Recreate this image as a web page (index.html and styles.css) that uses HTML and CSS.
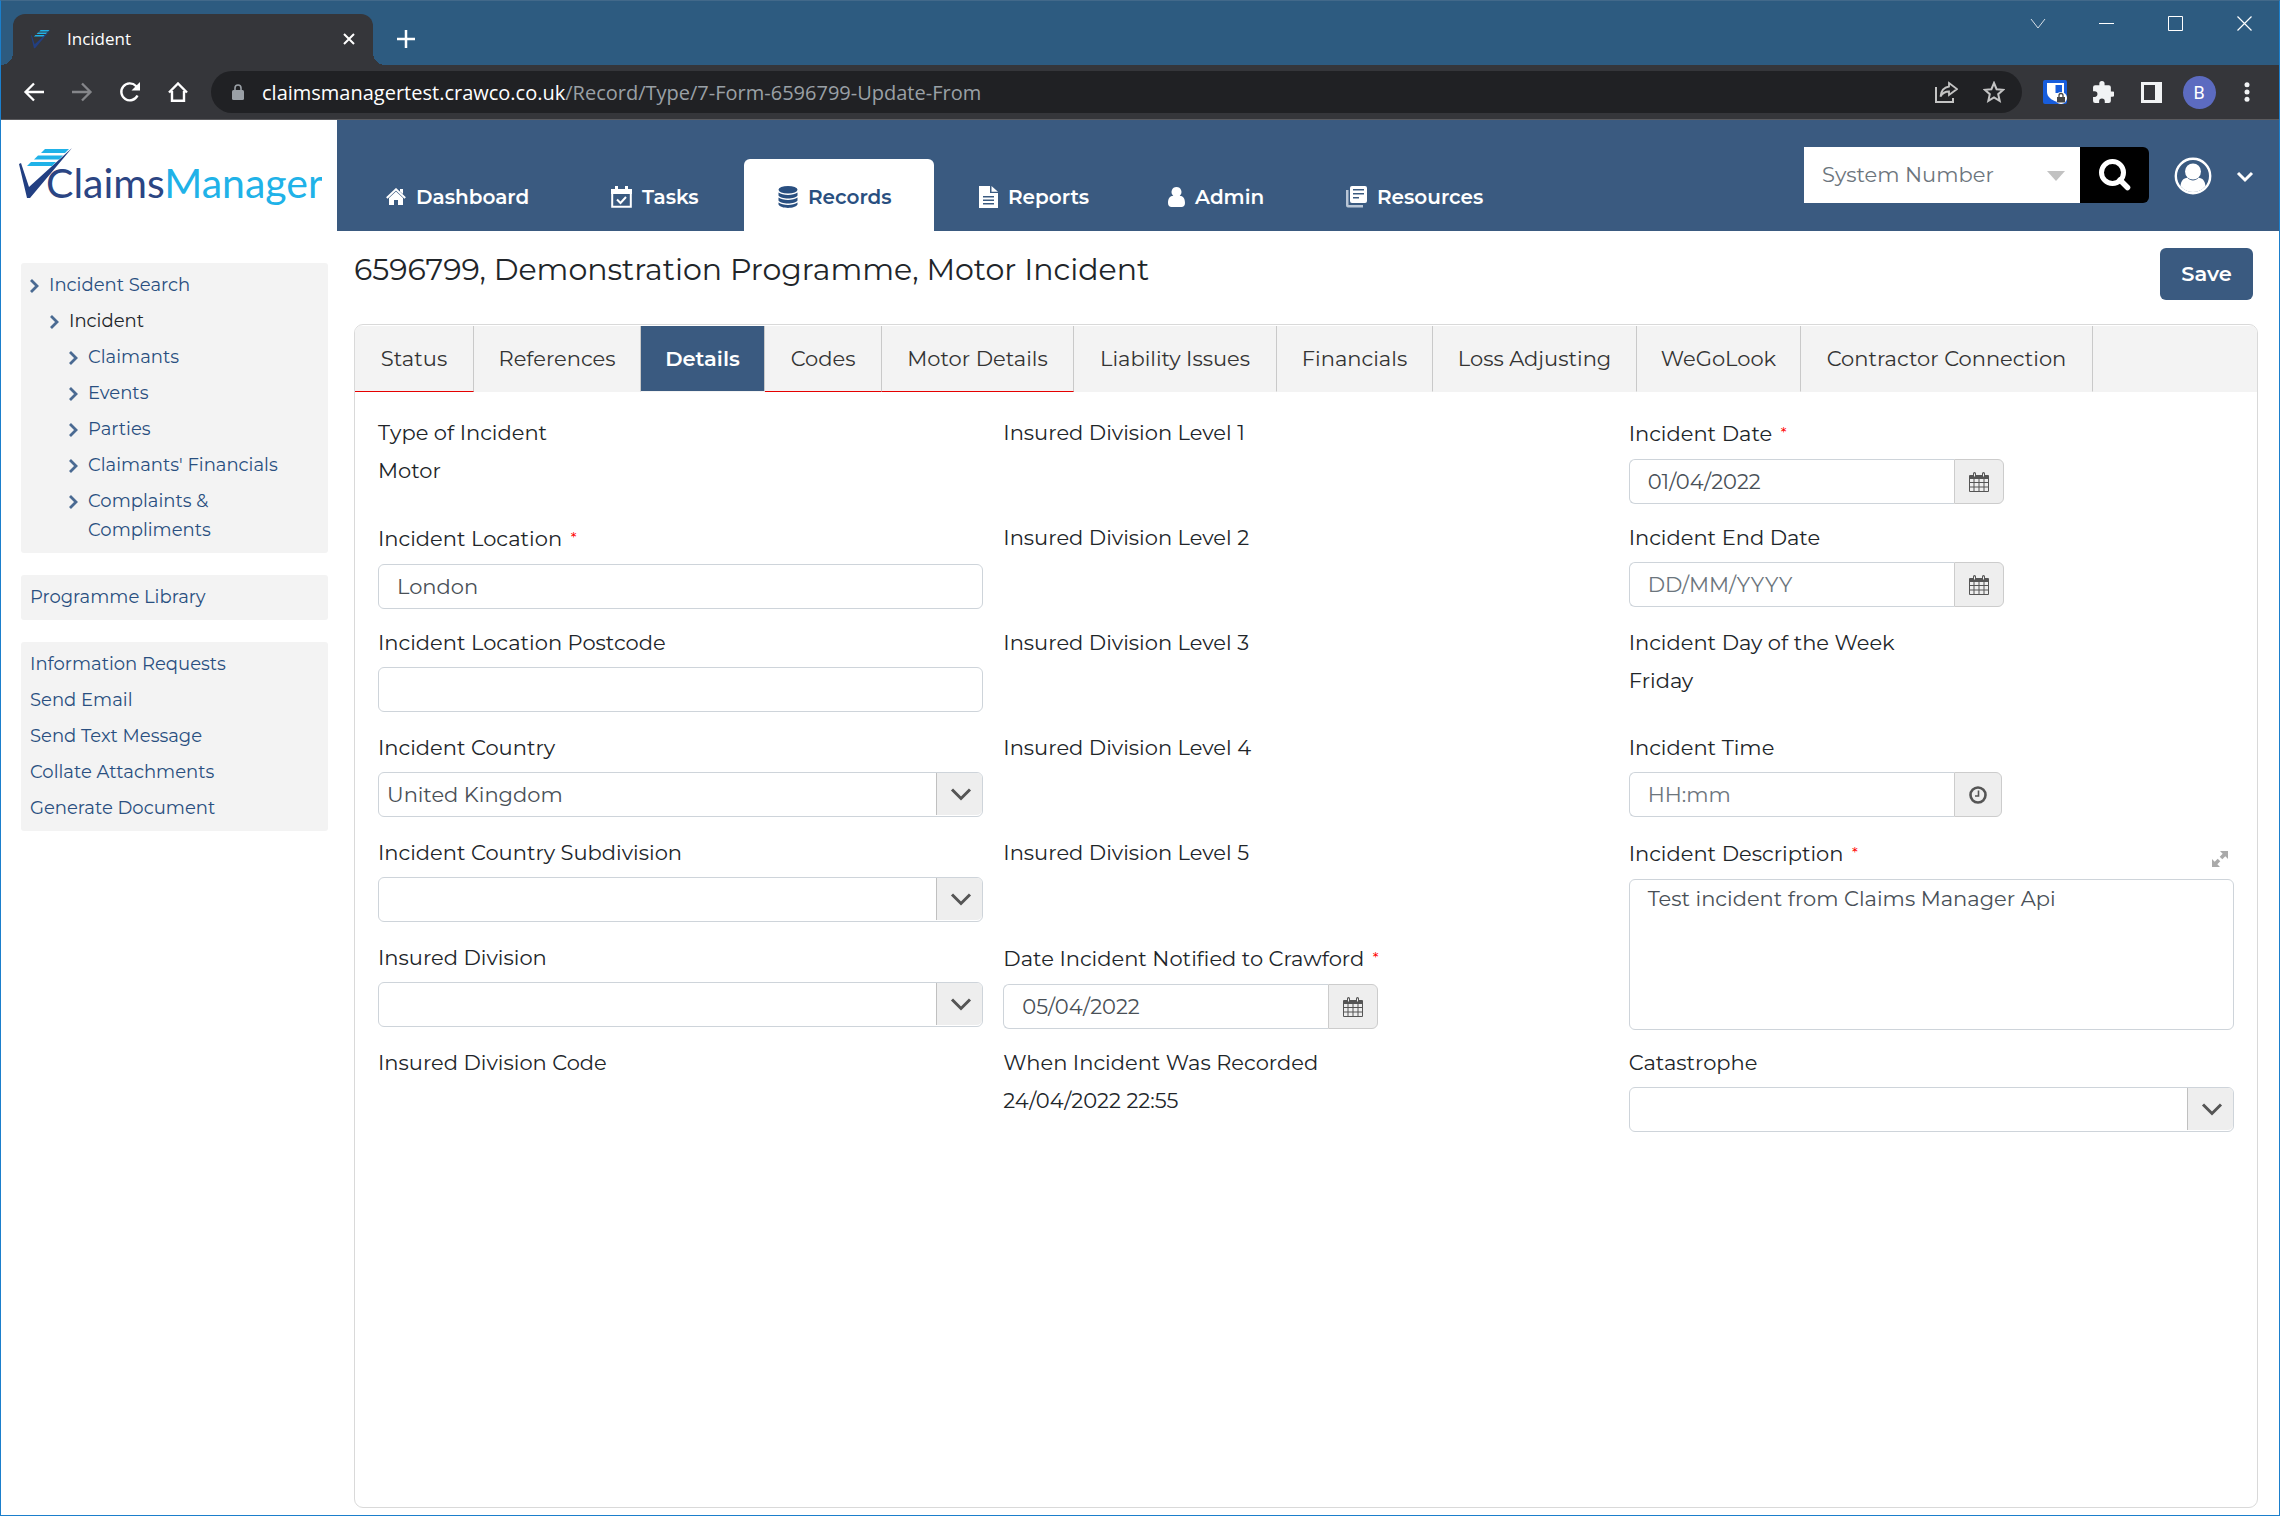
FILE: index.html
```html
<!DOCTYPE html>
<html lang="en">
<head>
<meta charset="utf-8">
<title>Incident</title>
<link rel="stylesheet" href="styles.css">
</head>
<body>
<svg class="sprite" aria-hidden="true">
  <defs>
    <symbol id="i-calendar" viewBox="0 0 20 20"><path fill="#555" fill-rule="evenodd" d="M1 3h3V1.500a1.500 1.500 0 0 1 3 0V3h6V1.500a1.500 1.500 0 0 1 3 0V3h3a1 1 0 0 1 1 1v15a1 1 0 0 1-1 1H1a1 1 0 0 1-1-1V4a1 1 0 0 1 1-1zM1 7v3h3.500V7zm4.500 0v3h4V7zm5 0v3h4V7zm5 0v3H19V7zM1 11v3.500h3.500V11zm4.500 0v3.500h4V11zm5 0v3.500h4V11zm5 0v3.500H19V11zM1 15.500V19h3.500v-3.500zm4.500 0V19h4v-3.500zm5 0V19h4v-3.500zm5 0V19H19v-3.500z"/><path fill="#eee" d="M5 1.500h1v3H5zM14 1.500h1v3h-1z"/></symbol>
    <symbol id="i-down" viewBox="0 0 22 14"><path d="M2 2.500l9 9 9-9" fill="none" stroke="#555" stroke-width="3"/></symbol>
    <symbol id="i-angle" viewBox="0 0 10 16"><path d="M1 2l6 6-6 6" fill="none" stroke="#4a6a92" stroke-width="2.800"/></symbol>
    <symbol id="i-mark" viewBox="0 0 54 52"><path fill="#223f82" d="M0 17l2-1 8 24L53 1 11 51H8z"/><path fill="#20b2e8" d="M26 2h24l-4 4H22zM19 8.500h25l-4 4H15zM12 15h25l-4 4H8z"/></symbol>
  </defs>
</svg>
<div class="window">
  <header class="titlebar">
    <div class="browser-tab">
      <svg class="favicon" aria-hidden="true"><use href="#i-mark"/></svg>
      <span class="browser-tab-title">Incident</span>
      <button class="bare tab-close" aria-label="Close tab"><svg width="14" height="14"><path d="M2 2l10 10M12 2L2 12" stroke="#fff" stroke-width="2"/></svg></button>
    </div>
    <button class="bare new-tab" aria-label="New tab"><svg width="20" height="20"><path d="M10 1v18M1 10h18" stroke="#fff" stroke-width="2.500"/></svg></button>
    <div class="window-controls">
      <button class="bare" aria-label="Search tabs"><svg width="16" height="16"><path d="M1 3l7 9 7-9" fill="none" stroke="#d5dee6"/></svg></button>
      <button class="bare" aria-label="Minimise"><svg width="16" height="16"><path d="M0 7.500h15" stroke="#fff"/></svg></button>
      <button class="bare" aria-label="Maximise"><svg width="16" height="16"><path d="M.5.500h14v14H.5z" fill="none" stroke="#fff"/></svg></button>
      <button class="bare" aria-label="Close"><svg width="16" height="16"><path d="M.5.500l14 14M14.500.500l-14 14" stroke="#fff" stroke-width="1.200"/></svg></button>
    </div>
  </header>
  <div class="toolbar">
    <button class="bare tool" aria-label="Back"><svg width="22" height="20"><path d="M21 10H3M11 1.500L2.500 10l8.500 8.500" fill="none" stroke="#fff" stroke-width="2.300"/></svg></button>
    <button class="bare tool" aria-label="Forward"><svg width="22" height="20"><path d="M1 10h18M11 1.500l8.500 8.500-8.500 8.500" fill="none" stroke="#85868a" stroke-width="2.300"/></svg></button>
    <button class="bare tool" aria-label="Reload"><svg width="22" height="22"><path d="M18.500 14.500A8.500 8.500 0 1 1 17 5l2 2.500" fill="none" stroke="#fff" stroke-width="2.400"/><path d="M21 1v8.500h-8.500z" fill="#fff"/></svg></button>
    <button class="bare tool" aria-label="Home"><svg width="20" height="20"><path d="M1 10.500L10 1.500l9 9M4 9v9.800h12V9" fill="none" stroke="#fff" stroke-width="2.400"/></svg></button>
    <div class="omnibox">
      <svg class="lock" viewBox="0 0 12 16" aria-hidden="true"><path d="M3 7V4a3 3 0 0 1 6 0v3" fill="none" stroke="#9aa0a6" stroke-width="1.600"/><rect y="6" width="12" height="10" rx="1.500" fill="#9aa0a6"/></svg>
      <div class="url"><span class="url-host">claimsmanagertest.crawco.co.uk</span>/Record/Type/7-Form-6596799-Update-From</div>
      <button class="bare tool" aria-label="Share"><svg width="23" height="22"><path d="M1 6v15h17v-4" fill="none" stroke="#c4c4c4" stroke-width="2"/><path d="M14 2l8 6-8 6v-3.500c-4 0-6.500 1.500-8.500 5 .5-5 3.500-9.200 8.500-10z" fill="none" stroke="#c4c4c4" stroke-width="1.800"/></svg></button>
      <button class="bare tool" aria-label="Bookmark"><svg width="22" height="22"><path d="M11 2l2.600 6.200 6.600.6-5 4.400 1.500 6.600L11 16.300l-5.700 3.500 1.500-6.600-5-4.400 6.600-.6z" fill="none" stroke="#c4c4c4" stroke-width="2"/></svg></button>
    </div>
    <button class="bare tool" aria-label="Password manager"><svg width="24" height="24"><rect width="24" height="24" rx="2" fill="#175ddc"/><path d="M4 3h17v9c0 5-5 8-8.500 9.500C9 20 4 17 4 12z" fill="#fff"/><path d="M12.500 5H19v8h-6.500z" fill="#175ddc"/><circle cx="18" cy="18" r="6" fill="#fff"/><path d="M16 17v-1.500a2 2 0 0 1 4 0V17" fill="none" stroke="#444" stroke-width="1.300"/><rect x="14" y="17" width="8" height="5.500" fill="#444"/></svg></button>
    <button class="bare tool" aria-label="Extensions"><svg width="22" height="22" viewBox="1 1 21 21"><path fill="#f1f3f4" d="M20.500 11H19V7a2 2 0 0 0-2-2h-4V3.500a2.500 2.500 0 0 0-5 0V5H4a2 2 0 0 0-2 2v3.800h1.500a2.700 2.700 0 0 1 0 5.400H2V20a2 2 0 0 0 2 2h3.800v-1.500a2.700 2.700 0 0 1 5.400 0V22H17a2 2 0 0 0 2-2v-4h1.500a2.500 2.500 0 0 0 0-5z"/></svg></button>
    <button class="bare tool" aria-label="Side panel"><svg width="21" height="21"><path fill="#f1f3f4" fill-rule="evenodd" d="M0 0h21v21H0zM3 3v15h11V3z"/></svg></button>
    <button class="bare tool" aria-label="Profile"><span class="profile">B</span></button>
    <button class="bare tool" aria-label="Menu"><svg width="6" height="20"><g fill="#f1f3f4"><circle cx="3" cy="2.800" r="2.500"/><circle cx="3" cy="10" r="2.500"/><circle cx="3" cy="17.200" r="2.500"/></g></svg></button>
  </div>

  <div class="app-header">
    <a class="logo" href="#" aria-label="ClaimsManager">
      <svg width="304" height="72" viewBox="0 0 304 72"><use href="#i-mark" x="1" y="6" width="54" height="52"/><text class="logo-text" x="28" y="57"><tspan fill="#2b4583">Claims</tspan><tspan fill="#20b2e8">Manager</tspan></text></svg>
    </a>
    <nav class="main-nav">
      <a class="nav-link" href="#"><svg width="20" height="18" viewBox="0 0 20 18"><path fill="#fff" d="M10 3.500l7 6.500v7h-5v-5H8v5H3v-7z"/><path d="M.8 10L10 1.300l9.200 8.700" fill="none" stroke="#fff" stroke-width="2"/><path fill="#fff" d="M14 1h3v5l-3-2.500z"/></svg>Dashboard</a>
      <a class="nav-link" href="#"><svg width="21" height="22" viewBox="0 0 21 22"><path d="M1.200 5h18.600v15.800H1.200z" fill="none" stroke="#fff" stroke-width="2"/><path fill="#fff" d="M0 3h21v5H0zM4 0h3v5H4zM14 0h3v5h-3z"/><path d="M6 13.500l3.500 3.500 5.500-6" fill="none" stroke="#fff" stroke-width="2"/></svg>Tasks</a>
      <a class="nav-link is-active" href="#"><svg width="20" height="22" viewBox="0 0 20 22"><g fill="#294f80"><ellipse cx="10" cy="3.800" rx="9.500" ry="3.800"/><path d="M.5 6.500c4 3.200 15 3.200 19 0v3c-2 4-17 4-19 0zM.5 11.500c4 3.200 15 3.200 19 0v3c-2 4-17 4-19 0zM.5 16.500c4 3.200 15 3.200 19 0v2c-2 4.500-17 4.500-19 0z"/></g></svg>Records</a>
      <a class="nav-link" href="#"><svg width="19" height="22" viewBox="0 0 19 22"><path fill="#fff" fill-rule="evenodd" d="M0 0h11v7h8v15H0zM4 10v1.500h11V10zm0 3.500V15h11v-1.500zM4 17v1.500h11V17z"/><path fill="#fff" d="M12.500 0L19 5.800h-6.500z"/></svg>Reports</a>
      <a class="nav-link" href="#"><svg width="17" height="20" viewBox="0 0 17 20"><path fill="#fff" d="M8.500 0a5 5 0 0 1 3.200 8.800c3.500 0 5.300 3 5.300 7.200 0 2.500-1.500 4-3.500 4h-10C1.500 20 0 18.500 0 16c0-4.200 1.800-7.200 5.300-7.200A5 5 0 0 1 8.500 0z"/></svg>Admin</a>
      <a class="nav-link" href="#"><svg width="21" height="22" viewBox="0 0 21 22"><path fill="#fff" fill-rule="evenodd" d="M6 0h13a2 2 0 0 1 2 2v13a2 2 0 0 1-2 2H6a2 2 0 0 1-2-2V2a2 2 0 0 1 2-2zm1 3v1.500h11V3zm0 4v1.500h11V7zm0 4v1.500h6V11z"/><path fill="#b9c6d6" d="M0 4h2.500v15H17v2.500H2a2 2 0 0 1-2-2z"/></svg>Resources</a>
    </nav>
    <form class="search">
      <div class="search-field">
        <select class="search-select" aria-label="Search by"><option>System Number</option></select>
        <span class="triangle"></span>
      </div>
      <button class="bare search-button" type="button" aria-label="Search"><svg width="32" height="32"><circle cx="13.500" cy="13.500" r="11" fill="none" stroke="#fff" stroke-width="5"/><path d="M21 21l7.500 7.500" stroke="#fff" stroke-width="5.500" stroke-linecap="round"/></svg></button>
    </form>
    <button class="bare user" aria-label="Account">
      <svg width="38" height="38" viewBox="0 0 38 38"><circle cx="19" cy="19" r="17.200" fill="none" stroke="#fff" stroke-width="2.400"/><circle cx="19" cy="14.500" r="8" fill="#fff"/><path fill="#fff" d="M6.500 29c.5-5 3-8 7-8.200 3 3.500 8 3.500 11 0 4 .2 6.500 3.200 7 8.200A16 16 0 0 1 6.500 29z"/></svg>
      <svg width="18" height="16"><path d="M2 5l7 7 7-7" fill="none" stroke="#fff" stroke-width="3"/></svg>
    </button>
  </div>

  <div class="body">
    <aside class="sidebar">
      <nav class="side-box">
        <a class="side-link" href="#"><svg class="angle"><use href="#i-angle"/></svg>Incident Search</a>
        <a class="side-link level-2 is-current" href="#"><svg class="angle"><use href="#i-angle"/></svg>Incident</a>
        <a class="side-link level-3" href="#"><svg class="angle"><use href="#i-angle"/></svg>Claimants</a>
        <a class="side-link level-3" href="#"><svg class="angle"><use href="#i-angle"/></svg>Events</a>
        <a class="side-link level-3" href="#"><svg class="angle"><use href="#i-angle"/></svg>Parties</a>
        <a class="side-link level-3" href="#"><svg class="angle"><use href="#i-angle"/></svg>Claimants' Financials</a>
        <a class="side-link level-3" href="#"><svg class="angle"><use href="#i-angle"/></svg><span>Complaints &amp;<br>Compliments</span></a>
      </nav>
      <nav class="side-box">
        <a class="side-link" href="#">Programme Library</a>
      </nav>
      <nav class="side-box">
        <a class="side-link" href="#">Information Requests</a>
        <a class="side-link" href="#">Send Email</a>
        <a class="side-link" href="#">Send Text Message</a>
        <a class="side-link" href="#">Collate Attachments</a>
        <a class="side-link" href="#">Generate Document</a>
      </nav>
    </aside>
    <main class="content">
      <div class="page-head">
        <h1 class="page-title">6596799, Demonstration Programme, Motor Incident</h1>
        <button class="save" type="button">Save</button>
      </div>
      <section class="panel">
        <div class="tabs" role="tablist">
          <button class="tab has-error" role="tab">Status</button>
          <button class="tab" role="tab">References</button>
          <button class="tab is-active" role="tab" aria-selected="true">Details</button>
          <button class="tab has-error" role="tab">Codes</button>
          <button class="tab has-error" role="tab">Motor Details</button>
          <button class="tab" role="tab">Liability Issues</button>
          <button class="tab" role="tab">Financials</button>
          <button class="tab" role="tab">Loss Adjusting</button>
          <button class="tab" role="tab">WeGoLook</button>
          <button class="tab" role="tab">Contractor Connection</button>
        </div>
        <form class="fields">
          <div class="field"><span class="label">Type of Incident</span><span class="value">Motor</span></div>
          <div class="field"><label class="label required" for="location">Incident Location <span class="star">*</span></label><input class="control" id="location" type="text" value="London"></div>
          <div class="field"><label class="label" for="postcode">Incident Location Postcode</label><input class="control" id="postcode" type="text"></div>
          <div class="field"><label class="label" for="country">Incident Country</label><div class="dropdown"><select class="control" id="country"><option>United Kingdom</option></select><span class="dropdown-arrow"><svg width="22" height="14"><use href="#i-down"/></svg></span></div></div>
          <div class="field"><label class="label" for="subdivision">Incident Country Subdivision</label><div class="dropdown"><select class="control" id="subdivision"><option></option></select><span class="dropdown-arrow"><svg width="22" height="14"><use href="#i-down"/></svg></span></div></div>
          <div class="field"><label class="label" for="division">Insured Division</label><div class="dropdown"><select class="control" id="division"><option></option></select><span class="dropdown-arrow"><svg width="22" height="14"><use href="#i-down"/></svg></span></div></div>
          <div class="field"><span class="label">Insured Division Code</span></div>

          <div class="field"><span class="label">Insured Division Level 1</span></div>
          <div class="field"><span class="label">Insured Division Level 2</span></div>
          <div class="field"><span class="label">Insured Division Level 3</span></div>
          <div class="field"><span class="label">Insured Division Level 4</span></div>
          <div class="field"><span class="label">Insured Division Level 5</span></div>
          <div class="field"><label class="label required" for="notified">Date Incident Notified to Crawford <span class="star">*</span></label><div class="picker"><input class="control" id="notified" type="text" value="05/04/2022"><button class="addon" type="button" aria-label="Choose date"><svg width="20" height="20"><use href="#i-calendar"/></svg></button></div></div>
          <div class="field"><span class="label">When Incident Was Recorded</span><span class="value">24/04/2022 22:55</span></div>

          <div class="field"><label class="label required" for="date">Incident Date <span class="star">*</span></label><div class="picker"><input class="control" id="date" type="text" value="01/04/2022"><button class="addon" type="button" aria-label="Choose date"><svg width="20" height="20"><use href="#i-calendar"/></svg></button></div></div>
          <div class="field"><label class="label" for="end-date">Incident End Date</label><div class="picker"><input class="control" id="end-date" type="text" placeholder="DD/MM/YYYY"><button class="addon" type="button" aria-label="Choose date"><svg width="20" height="20"><use href="#i-calendar"/></svg></button></div></div>
          <div class="field"><span class="label">Incident Day of the Week</span><span class="value">Friday</span></div>
          <div class="field"><label class="label" for="time">Incident Time</label><div class="picker"><input class="control" id="time" type="text" placeholder="HH:mm"><button class="addon addon-time" type="button" aria-label="Choose time"><svg width="18" height="18"><circle cx="9" cy="9" r="7.500" fill="none" stroke="#555" stroke-width="2.600"/><path d="M9.500 4.500v5.500H6" fill="none" stroke="#555" stroke-width="1.600"/></svg></button></div></div>
          <div class="field field-tall">
            <div class="label-row"><label class="label required" for="description">Incident Description <span class="star">*</span></label><button class="bare expand" type="button" aria-label="Expand"><svg width="16" height="16"><path fill="#aaa" d="M8 0h8v8l-2.700-2.700-3 3-2.600-2.600 3-3zM0 8l2.700 2.700 3-3 2.600 2.600-3 3L8 16H0z"/><path stroke="#fff" stroke-width="1.500" d="M5 5l6 6"/></svg></button></div>
            <textarea class="control" id="description">Test incident from Claims Manager Api</textarea>
          </div>
          <div class="field"><label class="label" for="catastrophe">Catastrophe</label><div class="dropdown"><select class="control" id="catastrophe"><option></option></select><span class="dropdown-arrow"><svg width="22" height="14"><use href="#i-down"/></svg></span></div></div>
        </form>
      </section>
    </main>
  </div>
</div>
</body>
</html>
```
FILE: styles.css
```css
* { box-sizing: border-box; }

body {
  margin: 0;
  font-family: Montserrat, Inter, "Open Sans", sans-serif;
  font-size: 21px;
  color: #212529;
  background: #fff;
}

button, input, select, textarea { font: inherit; color: inherit; }
a { color: inherit; text-decoration: none; }
svg { display: block; flex: none; }

.sprite { position: absolute; width: 0; height: 0; }

.bare {
  display: flex;
  align-items: center;
  justify-content: center;
  padding: 0;
  border: 0;
  background: none;
}

.window {
  display: flex;
  flex-direction: column;
  min-height: 100vh;
  border: 1px solid #1b7fcc;
  border-top-color: #42698a;
}

/* Browser frame */
.titlebar {
  display: flex;
  height: 64px;
  padding-left: 12px;
  background: #2d5b80;
  font-family: "Segoe UI", "Open Sans", sans-serif;
}

.browser-tab {
  position: relative;
  display: flex;
  align-items: center;
  width: 360px;
  margin-top: 13px;
  padding: 0 14px 2px 18px;
  border-radius: 12px 12px 0 0;
  background: #35363a;
  color: #fff;
  font-size: 17px;
}

.browser-tab::before,
.browser-tab::after {
  content: "";
  position: absolute;
  bottom: 0;
  width: 12px;
  height: 12px;
}
.browser-tab::before { right: 100%; background: radial-gradient(circle at 0 0, transparent 12px, #35363a 12px); }
.browser-tab::after { left: 100%; background: radial-gradient(circle at 100% 0, transparent 12px, #35363a 12px); }

.favicon { width: 20px; height: 20px; }
.browser-tab-title { flex: 1; margin-left: 16px; }
.tab-close { width: 20px; height: 20px; }
.new-tab { width: 42px; height: 50px; margin: 13px 0 0 12px; }

.window-controls { display: flex; margin-left: auto; }
.window-controls button { width: 69px; height: 46px; }

.toolbar {
  display: flex;
  align-items: center;
  height: 55px;
  padding: 0 8px 0 9px;
  border-bottom: 1px solid #5b5b5e;
  background: #35363a;
}

.tool { flex: none; width: 48px; height: 42px; }

.omnibox {
  display: flex;
  flex: 1;
  align-items: center;
  height: 42px;
  margin: 0 9px;
  padding: 0 4px 0 21px;
  border-radius: 21px;
  background: #202124;
  font-family: "Segoe UI", "Open Sans", sans-serif;
  font-size: 20px;
  color: #9aa0a6;
}
.lock { width: 12px; height: 16px; }
.url { flex: 1; margin-left: 18px; }
.url-host { color: #fff; }

.profile {
  width: 33px;
  border-radius: 50%;
  background: #5c6bc0;
  color: #fff;
  font-family: Roboto, sans-serif;
  font-size: 18px;
  line-height: 33px;
}

/* Application header */
.app-header {
  display: flex;
  height: 111px;
  background: #3a5a80;
  color: #fff;
}

.logo { width: 336px; padding: 21px 0 0 17px; background: #fff; }
.logo-text { font-family: Lato, sans-serif; font-size: 41px; }

.main-nav {
  display: grid;
  grid-template-columns: 225px 167px 201px 189px 178px 215px;
  align-items: end;
  margin-left: 15px;
  font-weight: 600;
  font-size: 20px;
}
.nav-link {
  display: flex;
  align-items: center;
  gap: 10px;
  height: 72px;
  padding: 4px 0 0 34px;
  white-space: nowrap;
}
.nav-link.is-active {
  width: 190px;
  border-radius: 6px 6px 0 0;
  background: #fff;
  color: #294f80;
}

.search { display: flex; height: 56px; margin: 27px 0 0 auto; }
.search-field { position: relative; width: 276px; }
.search-select {
  width: 100%;
  height: 100%;
  padding: 0 18px 2px;
  border: 0;
  border-radius: 0;
  background: #fff;
  color: #6c757d;
  appearance: none;
}
.triangle {
  position: absolute;
  top: 24px;
  right: 15px;
  border: 9px solid transparent;
  border-top: 10px solid #c2c2c2;
  border-bottom: 0;
  pointer-events: none;
}
.search-button { width: 69px; border-radius: 0 6px 6px 0; background: #000; }
.user { gap: 24px; height: 56px; margin: 28px 25px 0; }

/* Page body */
.body { display: flex; flex: 1; }

.sidebar {
  display: flex;
  flex-direction: column;
  gap: 22px;
  width: 353px;
  padding: 32px 26px 0 20px;
}
.side-box {
  display: flex;
  flex-direction: column;
  gap: 7px;
  padding: 8px 9px;
  border-radius: 3px;
  background: #f3f3f3;
  color: #294f80;
  font-size: 18px;
  font-weight: 450;
  line-height: 29px;
}
.side-link { display: flex; }
.angle { width: 10px; height: 16px; margin: 7px 9px 0 0; }
.level-2 { padding-left: 20px; }
.level-3 { padding-left: 39px; }
.is-current { color: #212529; }

.content {
  display: flex;
  flex: 1;
  flex-direction: column;
  padding: 17px 21px 7px 0;
}

.page-head { display: flex; justify-content: space-between; margin: 0 5px 24px 0; }
.page-title { margin: 0; font-size: 30px; font-weight: 450; line-height: 44px; }
.save {
  width: 93px;
  height: 52px;
  padding: 0 0 2px;
  border: 0;
  border-radius: 6px;
  background: #3a5a80;
  color: #fff;
  font-weight: 600;
}

.panel {
  flex: 1;
  padding-top: 1px;
  border: 1px solid #d9d9d9;
  border-radius: 9px;
  overflow: hidden;
}

.tabs {
  display: grid;
  grid-template-columns: 119px 167px 124px 117px 192px 203px 156px 204px 164px 292px;
  height: 66px;
  background: #f3f3f3;
}
.tab {
  padding: 0 0 1px;
  border: 0;
  border-right: 1px solid #c9c9c9;
  border-bottom: 1px solid #f3f3f3;
  background: none;
  color: #333;
  font-weight: 450;
  white-space: nowrap;
}
.tab.has-error { border-bottom-color: #e60000; }
.tab.is-active { background: #3a5a80; color: #fff; font-weight: 600; }

.fields {
  display: grid;
  grid-template-columns: repeat(3, 1fr);
  grid-template-rows: repeat(7, minmax(105px, auto));
  grid-auto-flow: column;
  column-gap: 20px;
  padding: 25px 23px;
}
.field { display: flex; flex-direction: column; gap: 8px; }
.field-tall { grid-row: span 2; }

.label { font-weight: 450; line-height: 32px; }
.label.required { line-height: 34px; }
.star { margin-left: 3px; color: #f00; font-size: 15px; vertical-align: 3px; line-height: 1; }
.value { line-height: 28px; }

.control {
  width: 100%;
  height: 45px;
  padding: 0 18px;
  border: 1px solid #ced4da;
  border-radius: 6px;
  background: #fff;
  color: #495057;
}
.control::placeholder { color: #6c757d; opacity: 1; }
textarea.control { height: 151px; padding: 5px 18px; line-height: 28px; resize: none; }

.dropdown { position: relative; }
.dropdown .control { padding: 0 56px 0 8px; appearance: none; }
.dropdown-arrow {
  position: absolute;
  top: 1px;
  right: 1px;
  bottom: 2px;
  display: flex;
  align-items: center;
  justify-content: center;
  width: 46px;
  padding-left: 3px;
  border-left: 1px solid #c0c0c0;
  border-radius: 0 5px 5px 0;
  background: #eee;
  pointer-events: none;
}

.picker { display: flex; }
.picker .control { width: 325px; border-right: 0; border-radius: 6px 0 0 6px; }
.addon {
  display: flex;
  align-items: center;
  justify-content: center;
  width: 50px;
  padding: 0;
  border: 1px solid #ccc;
  border-radius: 0 6px 6px 0;
  background: #eee;
}
.addon-time { width: 48px; }

.label-row { display: flex; justify-content: space-between; }
.expand { width: 16px; height: 16px; margin: 14px 6px 0 0; }
```
